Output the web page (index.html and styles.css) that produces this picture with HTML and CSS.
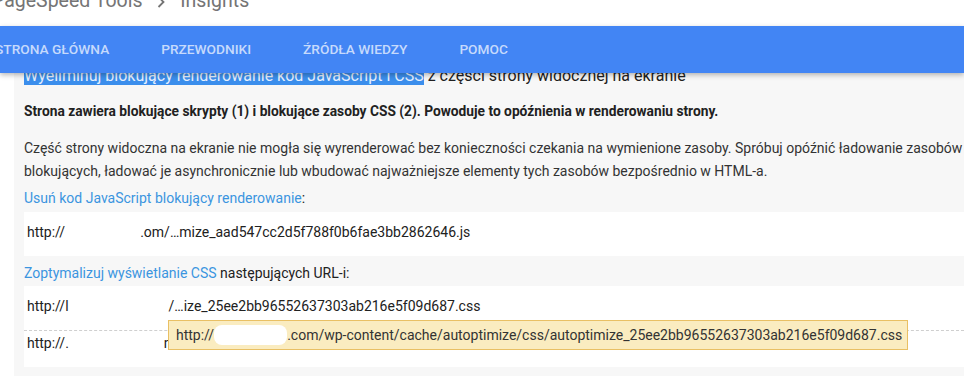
FILE: index.html
```html
<!DOCTYPE html>
<html lang="pl">
<head>
<meta charset="utf-8">
<title>PageSpeed Insights</title>
<link rel="stylesheet" href="styles.css">
</head>
<body>
<header class="header">
  <div class="topbar">
    <div class="title">
      <span>PageSpeed Tools</span>
      <svg class="chev" width="8" height="12" viewBox="0 0 8 12"><polyline points="1.5,1 6.5,6 1.5,11" fill="none" stroke="#757575" stroke-width="1.8"/></svg>
      <span>Insights</span>
    </div>
  </div>
  <nav class="nav">
    <a class="nav-item">STRONA GŁÓWNA</a>
    <a class="nav-item">PRZEWODNIKI</a>
    <a class="nav-item">ŹRÓDŁA WIEDZY</a>
    <a class="nav-item">POMOC</a>
  </nav>
</header>
<main class="content">
  <h3 class="heading"><span class="selected">Wyeliminuj blokujący renderowanie kod JavaScript i CSS</span> z części strony widocznej na ekranie</h3>
  <p class="summary">Strona zawiera blokujące skrypty (1) i blokujące zasoby CSS (2). Powoduje to opóźnienia w renderowaniu strony.</p>
  <p class="desc">Część strony widoczna na ekranie nie mogła się wyrenderować bez konieczności czekania na wymienione zasoby. Spróbuj opóźnić ładowanie zasobów blokujących, ładować je asynchronicznie lub wbudować najważniejsze elementy tych zasobów bezpośrednio w HTML-a.</p>
  <p class="label label-first"><a class="link">Usuń kod JavaScript blokujący renderowanie</a>:</p>
  <div class="box">
    <div class="row">http://<span class="gap gap-js"></span>.om/…mize_aad547cc2d5f788f0b6fae3bb2862646.js</div>
  </div>
  <p class="label label-second"><a class="link">Zoptymalizuj wyświetlanie CSS</a> następujących URL-i:</p>
  <div class="box box-css">
    <div class="row row-first">http://l<span class="gap gap-css1"></span>/…ize_25ee2bb96552637303ab216e5f09d687.css</div>
    <div class="row row-second">http://.<span class="gap gap-css2"></span>n/…ize_25ee2bb96552637303ab216e5f09d687.css</div>
    <div class="tooltip">http://<span class="blot"></span>.com/wp-content/cache/autoptimize/css/autoptimize_25ee2bb96552637303ab216e5f09d687.css</div>
  </div>
</main>
</body>
</html>
```
FILE: styles.css
```css
html, body {
  margin: 0;
  padding: 0;
  background: #ffffff;
  overflow: hidden;
}
body {
  font-family: Roboto, "Liberation Sans", Arial, sans-serif;
  color: #212121;
}
.header {
  position: relative;
  z-index: 2;
}
.topbar {
  height: 26px;
  overflow: hidden;
  background: #fff;
}
.title {
  font-size: 19.5px;
  line-height: 20px;
  color: #757575;
  margin: -9px 0 0 -8px;
  white-space: nowrap;
}
.chev {
  display: inline-block;
  vertical-align: -1px;
  margin: 0 10px 0 10px;
}
.nav {
  height: 47px;
  background: #4285f4;
  display: flex;
  gap: 52px;
  box-shadow: 0 2px 5px rgba(0, 0, 0, 0.28);
  overflow: hidden;
}
.nav-item {
  font-size: 13.7px;
  font-weight: 500;
  line-height: 47px;
  color: #c6dafc;
  white-space: nowrap;
}
.nav-item:first-child {
  margin-left: -5px;
}
.content {
  position: relative;
  z-index: 1;
  margin-left: 14px;
  background: #f7f7f7;
  padding: 0 0 30px 10px;
}
.heading {
  margin: -7px 0 0 0;
  font-size: 16px;
  line-height: 19px;
  font-weight: 400;
  color: #212121;
  white-space: nowrap;
}
.selected {
  background: #3b8eec;
  color: #e8f1ff;
}
.summary {
  margin: 17px 0 0 0;
  font-size: 13.75px;
  line-height: 18px;
  font-weight: 700;
  color: #212121;
}
.desc {
  margin: 17px 0 0 0;
  font-size: 14px;
  line-height: 23px;
  color: #333333;
}
.label {
  margin: 0;
  font-size: 14px;
  line-height: 20px;
  color: #212121;
}
.label-first {
  margin-top: 5px;
}
.label-second {
  margin-top: 7px;
}
.link {
  color: #3b95e0;
}
.box {
  background: #ffffff;
  margin-top: 4px;
  font-size: 14px;
  color: #212121;
  white-space: nowrap;
}
.box-css {
  position: relative;
  margin-top: 3px;
}
.row {
  height: 44px;
  line-height: 40px;
  padding-left: 3px;
}
.row-first {
  border-bottom: 1px dashed #cfcfcf;
}
.row-second {
  height: 26px;
  line-height: 24px;
  padding-bottom: 10px;
}
.gap {
  display: inline-block;
}
.gap-js {
  width: 75px;
}
.gap-css1 {
  width: 100px;
}
.gap-css2 {
  width: 95px;
}
.tooltip {
  position: absolute;
  left: 144px;
  top: 34px;
  height: 28px;
  line-height: 28px;
  padding: 0 5px 0 7px;
  background: #faecc0;
  border: 1px solid #e9c064;
  color: #333333;
  font-size: 14px;
  white-space: nowrap;
}
.blot {
  display: inline-block;
  width: 73px;
  height: 20px;
  vertical-align: -5px;
  background: #ffffff;
  border-radius: 8px;
}
```
